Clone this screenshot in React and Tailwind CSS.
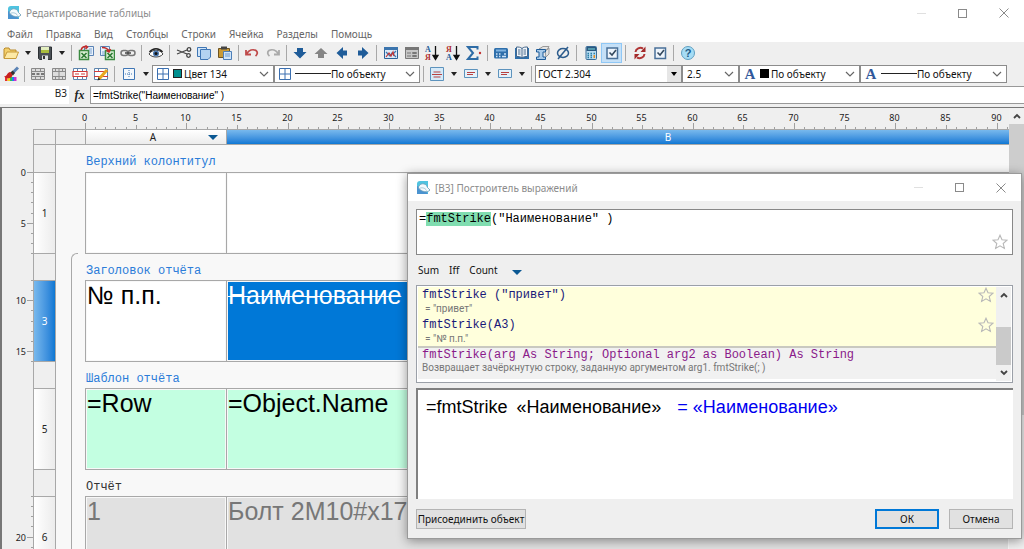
import React from "react";
import clsx from "clsx";

const MENU = ["Файл", "Правка", "Вид", "Столбцы", "Строки", "Ячейка", "Разделы", "Помощь"];

const BLUE = "#1f5c99";

// toolbar glyphs, all on a 16x16 grid
const glyphs = {
  folder: (
    <>
      <path d="M1 13V4l1-1h4l1 2h6v3" fill="#f3cf6b" stroke="#b98a2b" />
      <path d="M1 13.5 4 7h11.5l-2.5 6.5z" fill="#fde9a5" stroke="#c79a3a" />
    </>
  ),
  save: (
    <>
      <path d="M1.5 2h13v12.500h-12l-1-1z" fill="#4a5055" stroke="#2c3034" />
      <path d="M4 2h8v6H4z" fill="#e3efc0" />
      <path d="M4 5h8v3H4z" fill="#a9bd3f" />
      <path d="M5 10.500h6V15H5z" fill="#dfe3e6" />
      <path d="M6 11h2v3H6z" fill="#333" />
    </>
  ),
  excelIn: (
    <>
      <path d="M6.500 1.500h9v9h-9z" fill="#e8f1fb" stroke="#5b83b5" />
      <path d="M11 4h3M11 6h3M11 8h3" stroke="#7ea4d0" />
      <path d="M1.500 5.500h9v9h-9z" fill="#d9efd5" stroke="#3b8a41" strokeWidth="1.500" />
      <path d="m3.500 8 5 5m0-5-5 5" stroke="#2c7a34" strokeWidth="1.600" />
      <path d="M3 5c1-3 3-4 6-3M7.500.500 9.500 2l-2 2" fill="none" stroke="#c22b2b" strokeWidth="1.500" />
    </>
  ),
  excelOut: (
    <>
      <path d="M1.500 1.500h9v9h-9z" fill="#e8f1fb" stroke="#5b83b5" />
      <path d="M3 7h4M3 9h4" stroke="#7ea4d0" />
      <path d="M6.500 5.500h9v9h-9z" fill="#d9efd5" stroke="#3b8a41" strokeWidth="1.500" />
      <path d="m8.500 8 5 5m0-5-5 5" stroke="#2c7a34" strokeWidth="1.600" />
      <path d="M3 2.500c4 0 6 1 7 4M7.500 5.500 10 7l1.500-3" fill="none" stroke="#c22b2b" strokeWidth="1.500" />
    </>
  ),
  link: (
    <g fill="none" stroke="#777" strokeWidth="1.500">
      <rect x="1" y="5.500" width="7" height="5" rx="2.500" />
      <rect x="8" y="5.500" width="7" height="5" rx="2.500" />
      <path d="M5 8h6" stroke="#444" />
    </g>
  ),
  eye: (
    <>
      <path d="M1 9c3-5 11-5 14 0-3 4-11 4-14 0z" fill="#fff" stroke="#444" />
      <path d="M1.500 7C5 2.500 11 2.500 14.500 7" fill="none" stroke="#222" strokeWidth="1.500" />
      <circle cx="8" cy="8.500" r="3" fill="#4a78b0" />
      <circle cx="8" cy="8.500" r="1.500" fill="#111" />
    </>
  ),
  cut: (
    <g fill="none" stroke="#444" strokeWidth="1.300">
      <path d="M1 5l10 4M1 9l10-4" />
      <circle cx="13" cy="4.500" r="1.800" />
      <circle cx="12.500" cy="10.500" r="1.800" />
    </g>
  ),
  copy: (
    <g stroke="#3f76b5">
      <path d="M1.500 2.500h9v9h-9z" fill="#cfe4f8" />
      <path d="M4.500 4.500h10V12L12 14.500H4.500z" fill="#b3d3f2" />
    </g>
  ),
  paste: (
    <>
      <path d="M1.500 3.500h11v9h-11z" fill="#c99a35" stroke="#6d5220" />
      <path d="M4 1.500h6v3H4z" fill="#444" />
      <path d="M6.500 6.500h8v8h-8z" fill="#cfe4f8" stroke="#4d7fb8" />
      <path d="M8 9h5M8 11h5" stroke="#6b98cb" />
    </>
  ),
  undo: <path d="M2 5v4.500h5M2.500 9C5 5 9 4 12 5.500c2 1.500 1.500 4-.5 5.500" fill="none" stroke="#bf4a4a" strokeWidth="1.800" />,
  redo: <path d="M14 5v4.500H9M13.500 9C11 5 7 4 4 5.500 2 7 2.500 9.500 4.500 11" fill="none" stroke="#aaa" strokeWidth="1.800" />,
  down: <path d="M5 3h6v4h3.500L8 13.500 1.500 7H5z" fill={BLUE} />,
  up: <path d="M5 13h6V9h3.500L8 3 1.500 9H5z" fill="#858585" />,
  left: <path d="M13 5.500v5H9v3.500L2.500 8 9 2v3.500z" fill={BLUE} />,
  right: <path d="M3 5.500v5h4v3.500L13.500 8 7 2v3.500z" fill={BLUE} />,
  chart: (
    <>
      <path d="M1.500 2.500h13v11h-13z" fill="#dbeaf8" stroke="#2d6299" />
      <path d="M1 2h14v3H1z" fill="#3c75ae" />
      <path d="m3 7 4 4 2-3 4 4M13 6l-3 3" fill="none" stroke="#3c75ae" strokeWidth="1.200" />
      <path d="m3 12 3-4 2 3 2-4 1 4" fill="none" stroke="#c23434" strokeWidth="1.200" />
    </>
  ),
  form: (
    <>
      <path d="M1.500 2.500h13v11h-13z" fill="#c6c6c6" stroke="#7a7a7a" />
      <path d="M1 2h14v3H1z" fill="#777" />
      <path d="M3 8h4M3 11h4M8.500 7.500h4v1h-4zM8.500 10.500h4v1h-4z" stroke="#777" fill="#fff" />
    </>
  ),
  sortAsc: (
    <>
      <text x="1" y="7" fontSize="8" fontWeight="700" fill={BLUE} fontFamily="Liberation Serif, serif">А</text>
      <text x="1" y="15" fontSize="8" fontWeight="700" fill="#b03030" fontFamily="Liberation Serif, serif">Я</text>
      <path d="M11.500 1v12M9 10.500l2.500 4 2.500-4z" stroke="#111" strokeWidth="1.300" />
    </>
  ),
  sortDesc: (
    <>
      <text x="1" y="7" fontSize="8" fontWeight="700" fill="#b03030" fontFamily="Liberation Serif, serif">Я</text>
      <text x="1" y="15" fontSize="8" fontWeight="700" fill={BLUE} fontFamily="Liberation Serif, serif">А</text>
      <path d="M11.500 1v12M9 10.500l2.500 4 2.500-4z" stroke="#111" strokeWidth="1.300" />
    </>
  ),
  sigma: (
    <>
      <path d="M11.500 4.500V2H2l5 6-5 6h9.500v-2.500" fill="none" stroke="#2e6ca6" strokeWidth="2" />
      <circle cx="14" cy="8" r="1.200" fill="#c23434" />
    </>
  ),
  panel: (
    <>
      <rect x="1" y="3" width="14" height="10.500" rx="1.500" fill="#2f6fab" />
      <path d="M3 4.500h10v2H3z" fill="#7fb3e0" />
      <path d="M3 9h1.500M6 9h1.500M3 11.500h1.500M6 11.500h1.500M11 9h2M9 11.500h4" stroke="#cfe4f8" strokeWidth="1.300" />
    </>
  ),
  book: (
    <>
      <path d="M1 3h14v11H1z" fill="#2f6fab" />
      <path d="M2.500 2c2 0 4 0 5.500 1.500C9.500 2 11.500 2 13.500 2v9.500c-2 0-4 0-5.500 1.500-1.500-1.500-3.500-1.500-5.500-1.500z" fill="#f2f6fa" stroke="#46688c" />
      <path d="M8 3.500V13M4 5h2.500M4 7h2.500M4 9h2.500M9.500 5H12M9.500 7H12M9.500 9H12" stroke="#46688c" />
    </>
  ),
  beam: (
    <>
      <path d="M4 4 8 1.500h6l-2 3.500zM10 6l4-3v6l-3 3z" fill="#e4e4e4" stroke="#999" />
      <path d="M1.500 4.500h9V7H8v5h2.500v2.500h-9V12H4V7H1.500z" fill="#a9cbea" stroke={BLUE} />
    </>
  ),
  diameter: (
    <g fill="none" stroke="#2b5b8c" strokeWidth="1.500">
      <ellipse cx="8" cy="8" rx="5.500" ry="4.500" />
      <path d="M13 2 3 14" />
    </g>
  ),
  calc: (
    <>
      <rect x="3" y="1.500" width="10.500" height="13" rx="1" fill="#b9dcf2" stroke="#3a6c98" />
      <path d="M3.500 2h9.500v4H3.500z" fill="#2b587f" />
      <path d="M5 4h7" stroke="#7fdce0" />
      <path d="M4.500 8.500H6M7.500 8.500H9M10.500 8.500H12M4.500 10.500H6M7.500 10.500H9M4.500 12.500H6M7.500 12.500H9" stroke="#2b7fa5" strokeWidth="1.300" />
      <path d="M10.500 11.500H12" stroke="#e58a1f" strokeWidth="3" />
    </>
  ),
  check: (
    <>
      <path d="M3 3h10.500v10.500H3z" fill="#eef4fb" stroke="#4a7099" strokeWidth="1.500" />
      <path d="m5.500 7.500 2.500 2.500 4-5" fill="none" stroke="#34495e" strokeWidth="1.600" />
    </>
  ),
  refresh: (
    <>
      <path d="M3.500 7a5 4.500 0 0 1 7.500-3.500M12.500 9A5 4.500 0 0 1 5 12.500" fill="none" stroke="#b03535" strokeWidth="2" />
      <path d="M13.500 1.500V7H8.500zM2.500 14.500V9h5z" fill="#a32a2a" />
    </>
  ),
  help: (
    <>
      <circle cx="8" cy="8" r="6.500" fill="#a5dcf5" stroke="#5f9fc0" />
      <text x="8" y="12" textAnchor="middle" fontSize="11" fontWeight="700" fill="#1d5a85" fontFamily="Liberation Sans, sans-serif">?</text>
    </>
  ),
  brush: (
    <>
      <path d="M2 11h2.500v4H2z" fill="#e53030" />
      <path d="M4.500 11H7v4H4.500z" fill="#f0d020" />
      <path d="M7 11h2v4H7z" fill="#30c050" />
      <path d="M9 11h2v4H9z" fill="#2080f0" />
      <path d="M11 11h2.500v4H11z" fill="#d030d0" />
      <path d="m15 1.500-5 5" stroke="#5b83b5" strokeWidth="3" />
      <path d="M9.500 4.500 12 7l-2 2.500L7 7z" fill="#333" />
      <path d="M7.500 6c-3-.500-3 4-6.500 4.500 3 3 8 2 8.500-1.500z" fill="#c82020" />
    </>
  ),
  cellText: (
    <>
      <path d="M1.500 2.500h13v11h-13zM1 5.500h14M1 10.500h14M5.500 2v3.500M10.500 2v3.500M5.500 10.500V14M10.500 10.500V14" fill="#ddd" stroke="#8a8a8a" />
      <path d="M2 8h3M11 8h3M6.500 8h3" stroke="#555" strokeWidth="1.600" />
    </>
  ),
  cellSplit: <path d="M1.500 2.500h13v11h-13zM1 5.500h14M1 10.500h14M8 2v12M4.500 2v3.500M11.500 2v3.500M4.500 10.500V14M11.500 10.500V14" fill="#ddd" stroke="#8a8a8a" />,
  cellSize: (
    <>
      <path d="M1.500 2.500h13v11h-13zM5.500 2v3.500M10.500 2v3.500M5.500 10.500V14M10.500 10.500V14" fill="#fff" stroke="#5d84ad" />
      <path d="M1 5.500h14v5H1zM3 8h4M9 8h4" fill="#fff" stroke="#d03a3a" strokeWidth="1.200" />
    </>
  ),
  cellEdit: (
    <>
      <path d="M1.500 2.500h13v11h-13zM5.500 2v3.500M5.500 10.500V14" fill="#fff" stroke="#5d84ad" />
      <path d="M1 5.500h14M1 10.500h14" stroke="#d03a3a" strokeWidth="1.200" />
      <path d="m6 13 8-9" stroke="#e8a820" strokeWidth="3" />
      <path d="m4.500 14.500 1-3 2 2z" fill="#222" />
    </>
  ),
  dots: (
    <>
      <path d="M2.500 2.500h11v11h-11z" fill="#f4f8fc" stroke="#3f76b5" />
      <path d="M8 4v8M4 8h8" stroke="#3f76b5" strokeDasharray="1 1" />
    </>
  ),
  grid: <path d="M2.500 2.500h11v11h-11zM8 2v12M2 8h12" fill="#fff" stroke="#3a6fb0" />,
  alignBox: (
    <>
      <path d="M1.500 1.500h13v13h-13z" fill="#d6eaf8" stroke="#5d93bd" />
      <path d="M4.500 6h7M3 8.500h10M4.500 11h7" stroke="#b84040" />
    </>
  ),
  alignSmall: (
    <>
      <path d="M1.500 3.500h13v8h-13z" fill="#e4f1fa" stroke="#5d93bd" />
      <path d="M4 6.500h8M4 8.500h6" stroke="#b84040" />
    </>
  ),
};

function Glyph({ name, className = "size-4" }) {
  return (
    <svg viewBox="0 0 16 16" className={clsx("shrink-0", className)} aria-hidden="true">
      {glyphs[name]}
    </svg>
  );
}

function Logo() {
  return (
    <svg viewBox="0 0 16 16" className="size-4 shrink-0" aria-hidden="true">
      <path d="M2 4a3 3 0 0 1 3-3h8v13H2z" fill="#4fc3e0" />
      <path d="M2 6v8h11l-3-4z" fill="#4a93d0" />
      <path d="M3.500 8c0-5 7.500-6 9-.5l2.500 2.500c-2 3-9 2-11.500-2z" fill="#f4fafd" stroke="#6b9db8" strokeWidth=".8" />
      <path d="M4.500 8.500c2-1.500 6-.5 7 2" fill="none" stroke="#8fb8cc" strokeWidth=".8" />
    </svg>
  );
}

function Tool({ name, label, narrow, active }) {
  return (
    <button
      type="button"
      aria-label={label}
      className={clsx(
        "flex h-5 shrink-0 items-center justify-center",
        narrow ? "w-5" : "w-[21px]",
        active && "border border-[#90c8f6] bg-[#c5e0f7]",
      )}
    >
      <Glyph name={name} />
    </button>
  );
}

function DropArrow({ label }) {
  return (
    <button type="button" aria-label={label} className="flex h-5 w-[13px] shrink-0 items-center justify-center">
      <span className="border-x-[3px] border-t-4 border-x-transparent border-t-[#222]" />
    </button>
  );
}

function Sep() {
  return (
    <div className="flex w-[7px] shrink-0 justify-center">
      <div className="h-4 w-px bg-[#a8a8a8]" />
    </div>
  );
}

function Chevron() {
  return (
    <svg viewBox="0 0 10 6" className="mr-1 h-[6px] w-[10px] shrink-0" aria-hidden="true">
      <path d="m1 1 4 4 4-4" fill="none" stroke="#666" strokeWidth="1.2" />
    </svg>
  );
}

function Combo({ label, value, className, children, boxed }) {
  return (
    <label className={clsx("flex h-[18px] shrink-0 items-center border border-[#8c8c8c] bg-white", className)}>
      {children}
      <select aria-label={label} className="min-w-0 flex-1 appearance-none bg-transparent text-[10px] leading-4 text-[#111] outline-none">
        <option>{value}</option>
      </select>
      {boxed ? (
        <span className="flex h-4 w-[14px] items-center justify-center bg-[#e6e6e6]">
          <span className="border-x-[3px] border-t-4 border-x-transparent border-t-black" />
        </span>
      ) : (
        <Chevron />
      )}
    </label>
  );
}

function WindowButtons() {
  return (
    <div className="flex items-center">
      <button type="button" aria-label="Свернуть" className="flex h-5 w-[41px] items-center justify-center">
        <span className="h-px w-[9px] bg-[#e0e0e0]" />
      </button>
      <button type="button" aria-label="Развернуть" className="flex h-5 w-[41px] items-center justify-center">
        <span className="size-[9px] border border-[#8a8a8a]" />
      </button>
      <button type="button" aria-label="Закрыть" className="flex h-5 w-[41px] items-center justify-center">
        <svg viewBox="0 0 10 10" className="size-[10px]">
          <path d="m.5.5 9 9m0-9-9 9" stroke="#8a8a8a" />
        </svg>
      </button>
    </div>
  );
}

function LetterA() {
  return <span className="w-5 text-center font-['Liberation_Serif',serif] text-[15px] leading-4 font-bold text-[#31589b]">A</span>;
}

const STEP = 10.13;

function TopRuler() {
  const units = Array.from({ length: 92 }, (_, i) => i);
  return (
    <svg className="block h-[21px] w-full" aria-hidden="true">
      {units.map((u) => {
        const x = Math.round(52 + u * STEP) + 0.5;
        return (
          <g key={u}>
            <path d={`M${x} ${u % 10 === 0 ? 15 : u % 5 === 0 ? 17 : 19}V21`} stroke="#a0a0a0" />
            {u % 5 === 0 && (
              <text x={x - 1} y="13" textAnchor="middle" fontSize="9" fill="#222">
                {u}
              </text>
            )}
          </g>
        );
      })}
    </svg>
  );
}

// each band of the side ruler: first unit, last unit, top in px
const BANDS = [
  [0, 8, 64],
  [8, 16, 172],
  [16, 24, 388],
];

function SideRuler() {
  return (
    <svg className="block h-full w-[31px] shrink-0" aria-hidden="true">
      {BANDS.map(([from, to, top]) =>
        Array.from({ length: to - from + 1 }, (_, i) => {
          const u = from + i;
          const y = Math.round(top + i * STEP) + 0.5;
          return (
            <g key={`${from}-${u}`}>
              <path d={`M${u % 5 === 0 ? 25 : 29} ${y}H31`} stroke="#a0a0a0" />
              {u % 5 === 0 && (
                <text x="24" y={y + 3} textAnchor="end" fontSize="9" fill="#222">
                  {u}
                </text>
              )}
            </g>
          );
        }),
      )}
    </svg>
  );
}

const SECTIONS = [
  { title: "Верхний колонтитул", n: 1, a: "", b: "", fill: "bg-white" },
  { title: "Заголовок отчёта", n: 3, a: "№ п.п.", b: "Наименование", fill: "bg-white text-black", selected: true },
  { title: "Шаблон отчёта", n: 5, a: "=Row", b: "=Object.Name", fill: "bg-[#c3ffe1] text-black" },
  { title: "Отчёт", n: 6, a: "1", b: "Болт 2М10#x17", fill: "bg-[#e1e1e1] text-[#777]", dark: true },
];

function Sheet() {
  return (
    <table className="w-full table-fixed border-separate border-spacing-0 bg-[#f8f8f8]">
      <colgroup>
        <col className="w-[23px]" />
        <col className="w-[15px]" />
        <col className="w-[14px]" />
        <col className="w-[141px]" />
        <col />
      </colgroup>
      <thead>
        <tr className="h-[15px] text-[10px] leading-[14px]">
          <td className="border-x border-t border-[#a8a8a8] bg-[#efefef] p-0" />
          <td colSpan={2} className="border-t border-[#a8a8a8] bg-[#efefef] p-0" />
          <th className="border-t border-l border-[#a8a8a8] bg-linear-to-b from-white to-[#ececec] p-0 font-normal">
            <div className="flex items-center">
              <span className="w-1/12" />
              <span className="flex-1 text-center">A</span>
              <span className="mr-2 border-x-[5px] border-t-[5px] border-x-transparent border-t-[#0b5893]" />
            </div>
          </th>
          <th className="border-t border-l border-[#a8a8a8] bg-linear-to-b from-[#78b9ed] to-[#0a78d4] pl-[100px] font-normal text-white">B</th>
        </tr>
      </thead>
      <tbody>
        {SECTIONS.map((s, i) => (
          <React.Fragment key={s.n}>
            <tr className={i === 0 ? "h-7" : "h-[27px]"}>
              <td className="border-x border-t border-[#a8a8a8] bg-[#efefef] p-0" />
              <td className={clsx("p-0", i === 0 && "border-t border-[#a8a8a8]")} />
              <td className={clsx("p-0 align-top", i === 0 && "border-t border-[#a8a8a8]")}>
                {i > 0 && (
                  <div className={clsx("h-[27px] w-[7px] border-l border-[#a8a8a8]", i === 1 && "rounded-tl-[6px] border-t")} />
                )}
              </td>
              <td
                colSpan={2}
                className={clsx(
                  "border-t border-[#a8a8a8] p-0 pt-[7px] pl-px font-['Liberation_Mono',monospace] text-[12px] leading-4",
                  s.dark ? "text-[#333]" : "text-[#2b7cd8]",
                )}
              >
                {s.title}
              </td>
            </tr>
            <tr className="h-[81px] font-['Liberation_Sans',Arial,sans-serif] text-[25px] leading-[26px]">
              <th
                className={clsx(
                  "border-x border-t border-[#a8a8a8] bg-linear-to-r p-0 font-['Noto_Sans',sans-serif] text-[10px] leading-4 font-normal",
                  s.selected ? "from-[#78b9ed] to-[#0a78d4] text-white" : "from-white to-[#ececec]",
                )}
              >
                {s.n}
              </th>
              <td className="p-0" />
              <td className={clsx("p-0", i > 0 && "border-l border-[#a8a8a8]")} />
              <td className={clsx("border-t border-l border-[#a8a8a8] bg-clip-content p-px align-top whitespace-nowrap", s.fill)}>{s.a}</td>
              <td
                className={clsx(
                  "border-t border-l border-[#a8a8a8] bg-clip-content p-px align-top whitespace-nowrap",
                  s.selected ? "bg-[#0078d7] text-white line-through decoration-1" : s.fill,
                )}
              >
                {s.b}
              </td>
            </tr>
          </React.Fragment>
        ))}
      </tbody>
    </table>
  );
}

function Star() {
  return (
    <svg viewBox="0 0 16 16" className="size-4" aria-hidden="true">
      <path d="m8 1.200 2 4.600 5 .400-3.800 3.300 1.200 4.900L8 11.800l-4.400 2.600 1.200-4.900L1 6.200l5-.400z" fill="none" stroke="#b8b8b8" strokeWidth="1.100" />
    </svg>
  );
}

function ScrollArrow({ up, label }) {
  return (
    <button type="button" aria-label={label} className="flex h-4 w-full shrink-0 items-center justify-center">
      <svg viewBox="0 0 8 6" className="h-[6px] w-2">
        <path d={up ? "m1 5 3-3 3 3" : "m1 1 3 3 3-3"} fill="none" stroke="#444" strokeWidth="1.800" />
      </svg>
    </button>
  );
}

function Example({ code, result }) {
  return (
    <li className="flex h-[30px] items-start justify-between pr-[2px]">
      <div className="pl-1">
        <code className="block font-['Liberation_Mono',monospace] text-[12px] leading-4 text-[#1a1a7a]">{code}</code>
        <span className="block pl-[3px] font-[Roboto,sans-serif] text-[10px] leading-[11px] text-[#777]">= {result}</span>
      </div>
      <button type="button" aria-label="В избранное">
        <Star />
      </button>
    </li>
  );
}

function ExpressionDialog() {
  return (
    <section
      role="dialog"
      aria-label="Построитель выражений"
      className="absolute top-[173px] right-[2px] left-[407px] border border-[#9a9a9a] bg-[#efefef] shadow-[0_2px_10px_rgba(0,0,0,0.4)]"
    >
      <header className="flex h-[27px] items-center bg-white pl-[7px]">
        <Logo />
        <h2 className="ml-1 flex-1 text-[10px] leading-4 text-[#8c8c8c]">[B3] Построитель выражений</h2>
        <WindowButtons />
      </header>
      <div className="px-2 pt-2 pb-[9px]">
        <div className="flex h-[46px] items-end justify-between border border-[#888] bg-white">
          <div
            contentEditable
            suppressContentEditableWarning
            role="textbox"
            aria-label="Выражение"
            className="h-full flex-1 pt-[2px] pl-[2px] font-['Liberation_Mono',monospace] text-[12px] leading-[14px] text-black outline-none"
          >
            =<mark className="bg-[#80ddb0] text-black">fmtStrike</mark>("Наименование" )
          </div>
          <button type="button" aria-label="В избранное" className="mr-1 mb-1">
            <Star />
          </button>
        </div>
        <div className="flex h-[30px] items-center gap-[10px] pl-[2px] text-[10px] leading-4 text-[#111]">
          <button type="button">Sum</button>
          <button type="button">Iff</button>
          <button type="button">Count</button>
          <button type="button" aria-label="Ещё функции" className="ml-1 pt-1">
            <span className="block border-x-[5px] border-t-[5px] border-x-transparent border-t-[#0b5893]" />
          </button>
        </div>
        <div className="flex h-[98px] border border-[#9ba0a8] bg-white p-px">
          <div className="min-w-0 flex-1">
            <ul className="h-[61px] border-b-2 border-[#c9c9c0] bg-[#ffffdc]">
              <Example code={'fmtStrike ("привет")'} result={'"привет"'} />
              <Example code="fmtStrike(A3)" result={'"№ п.п."'} />
            </ul>
            <div className="h-[31px] bg-[#f1f1f1] pl-1 whitespace-nowrap">
              <code className="block font-['Liberation_Mono',monospace] text-[12px] leading-[14px] text-[#8a1a8a]">
                fmtStrike(arg As String; Optional arg2 as Boolean) As String
              </code>
              <p className="font-[Roboto,sans-serif] text-[10px] leading-3 text-[#777]">
                Возвращает зачёркнутую строку, заданную аргументом arg1. fmtStrike(; )
              </p>
            </div>
          </div>
          <div className="flex w-[15px] flex-col bg-[#f0f0f0]">
            <ScrollArrow up label="Вверх" />
            <div className="flex flex-1 flex-col justify-end">
              <div className="h-[38px] bg-[#cacaca]" />
            </div>
            <ScrollArrow label="Вниз" />
          </div>
        </div>
        <output className="mt-[5px] flex h-[111px] gap-3 border-t-2 border-l-2 border-[#808080] bg-white pt-[6px] pl-2 font-['Liberation_Sans',Arial,sans-serif] text-[18px] leading-[22px] whitespace-nowrap text-black">
          <span>
            =fmtStrike <span className="ml-1">«Наименование»</span>
          </span>
          <span className="pl-1 text-[#0000f0]">= «Наименование»</span>
        </output>
        <footer className="mt-[10px] flex gap-[10px] text-[10px] leading-4 text-[#111]">
          <button type="button" className="h-5 w-[110px] border border-[#b4b4b4] bg-[#e1e1e1] whitespace-nowrap">
            Присоединить объект
          </button>
          <span className="flex-1" />
          <button type="button" className="h-5 w-16 border-2 border-[#0078d7] bg-[#e1e1e1] leading-[14px]">
            ОК
          </button>
          <button type="button" className="h-5 w-16 border border-[#b4b4b4] bg-[#e1e1e1]">
            Отмена
          </button>
        </footer>
      </div>
    </section>
  );
}

export default function App() {
  return (
    <div className="relative flex h-screen flex-col overflow-hidden bg-white font-['Noto_Sans','Open_Sans',sans-serif] text-[#222]">
      <header className="flex h-[26px] shrink-0 items-center pl-[6px]">
        <Logo />
        <h1 className="ml-1 flex-1 text-[10px] leading-4 text-[#8c8c8c]">Редактирование таблицы</h1>
        <WindowButtons />
      </header>
      <nav className="flex h-4 shrink-0 items-center gap-[13px] pl-[7px] text-[10px] leading-4 text-[#666]">
        {MENU.map((m) => (
          <button type="button" key={m}>
            {m}
          </button>
        ))}
      </nav>

      <div className="shrink-0 bg-[#efefef]">
        <div className="flex h-[22px] items-center">
          <Tool name="folder" label="Открыть" />
          <DropArrow label="Открыть: ещё" />
          <Tool name="save" label="Сохранить" />
          <DropArrow label="Сохранить: ещё" />
          <Sep />
          <Tool name="excelIn" label="Импорт" />
          <Tool name="excelOut" label="Экспорт" />
          <Tool name="link" label="Связь" />
          <Sep />
          <Tool name="eye" label="Просмотр" />
          <Sep />
          <Tool name="cut" label="Вырезать" />
          <Tool name="copy" label="Копировать" narrow />
          <Tool name="paste" label="Вставить" />
          <Sep />
          <Tool name="undo" label="Отменить" narrow />
          <Tool name="redo" label="Повторить" />
          <Sep />
          <Tool name="down" label="Вниз" narrow />
          <Tool name="up" label="Вверх" />
          <Tool name="left" label="Влево" />
          <Tool name="right" label="Вправо" />
          <Sep />
          <Tool name="chart" label="Диаграмма" />
          <Tool name="form" label="Форма" />
          <Tool name="sortAsc" label="По возрастанию" narrow />
          <Tool name="sortDesc" label="По убыванию" />
          <Tool name="sigma" label="Сумма" />
          <Sep />
          <Tool name="panel" label="Панель" narrow />
          <Tool name="book" label="Справочник" />
          <Tool name="beam" label="Профиль" />
          <Tool name="diameter" label="Диаметр" narrow />
          <Sep />
          <Tool name="calc" label="Калькулятор" />
          <Tool name="check" label="Проверка" active />
          <Sep />
          <Tool name="refresh" label="Обновить" />
          <Tool name="check" label="Автообновление" narrow />
          <Sep />
          <Tool name="help" label="Справка" />
        </div>
        <div className="flex h-[22px] items-start">
          <div className="flex h-[19px] items-center">
            <Tool name="brush" label="Формат" />
            <Sep />
            <Tool name="cellText" label="Объединить" narrow />
            <Tool name="cellSplit" label="Разделить" />
            <Tool name="cellSize" label="Размер" />
            <Tool name="cellEdit" label="Правка ячейки" />
            <Sep />
            <Tool name="dots" label="Границы" />
            <DropArrow label="Границы: ещё" />
            <Combo label="Цвет границы" value="Цвет 134" className="w-[122px]">
              <Glyph name="grid" className="mx-[2px] size-4" />
              <span className="mr-[2px] size-[9px] border border-[#222] bg-[#008f8f]" />
            </Combo>
            <Combo label="Линия границы" value="По объекту" className="w-[146px]">
              <Glyph name="grid" className="mx-[2px] size-4" />
              <span className="h-px w-9 bg-[#222]" />
            </Combo>
            <Sep />
            <Tool name="alignBox" label="Выравнивание" narrow />
            <DropArrow label="Выравнивание: ещё" />
            <Tool name="alignSmall" label="Положение" />
            <DropArrow label="Положение: ещё" />
            <Tool name="alignSmall" label="Перенос" />
            <DropArrow label="Перенос: ещё" />
            <Sep />
            <Combo label="Шрифт" value="ГОСТ 2.304" className="w-[147px] pl-[2px]" boxed />
            <Combo label="Размер шрифта" value="2.5" className="w-[57px] pl-1" />
            <Combo label="Цвет текста" value="По объекту" className="w-[121px]">
              <LetterA />
              <span className="mr-[2px] size-[9px] bg-black" />
            </Combo>
            <Combo label="Линия текста" value="По объекту" className="w-[147px]">
              <LetterA />
              <span className="h-px w-9 bg-[#222]" />
            </Combo>
          </div>
        </div>
      </div>

      <div className="flex h-[21px] shrink-0 items-start bg-[#efefef]">
        <span className="h-[18px] w-[69px] bg-white pr-[2px] text-right text-[10px] leading-[14px]">B3</span>
        <span className="w-[21px] text-center font-['Liberation_Serif',serif] text-[12px] leading-[18px] font-bold italic">fx</span>
        <input
          aria-label="Формула"
          defaultValue={'=fmtStrike("Наименование" )'}
          className="h-[18px] min-w-0 flex-1 border-y border-l border-[#999] bg-white pl-[2px] font-['Liberation_Sans',Arial,sans-serif] text-[10px] leading-4 text-black outline-none"
        />
      </div>

      <main className="flex min-h-0 flex-1 overflow-hidden border-t border-l-2 border-[#777] bg-[#efefef]">
        <SideRuler />
        <div className="min-w-0 flex-1">
          <TopRuler />
          <Sheet />
        </div>
        <div className="flex w-[15px] shrink-0 flex-col bg-[#f0f0f0]">
          <ScrollArrow up label="Прокрутить вверх" />
          <div className="h-[66%] bg-[#cdcdcd]" />
        </div>
      </main>

      <ExpressionDialog />
    </div>
  );
}
